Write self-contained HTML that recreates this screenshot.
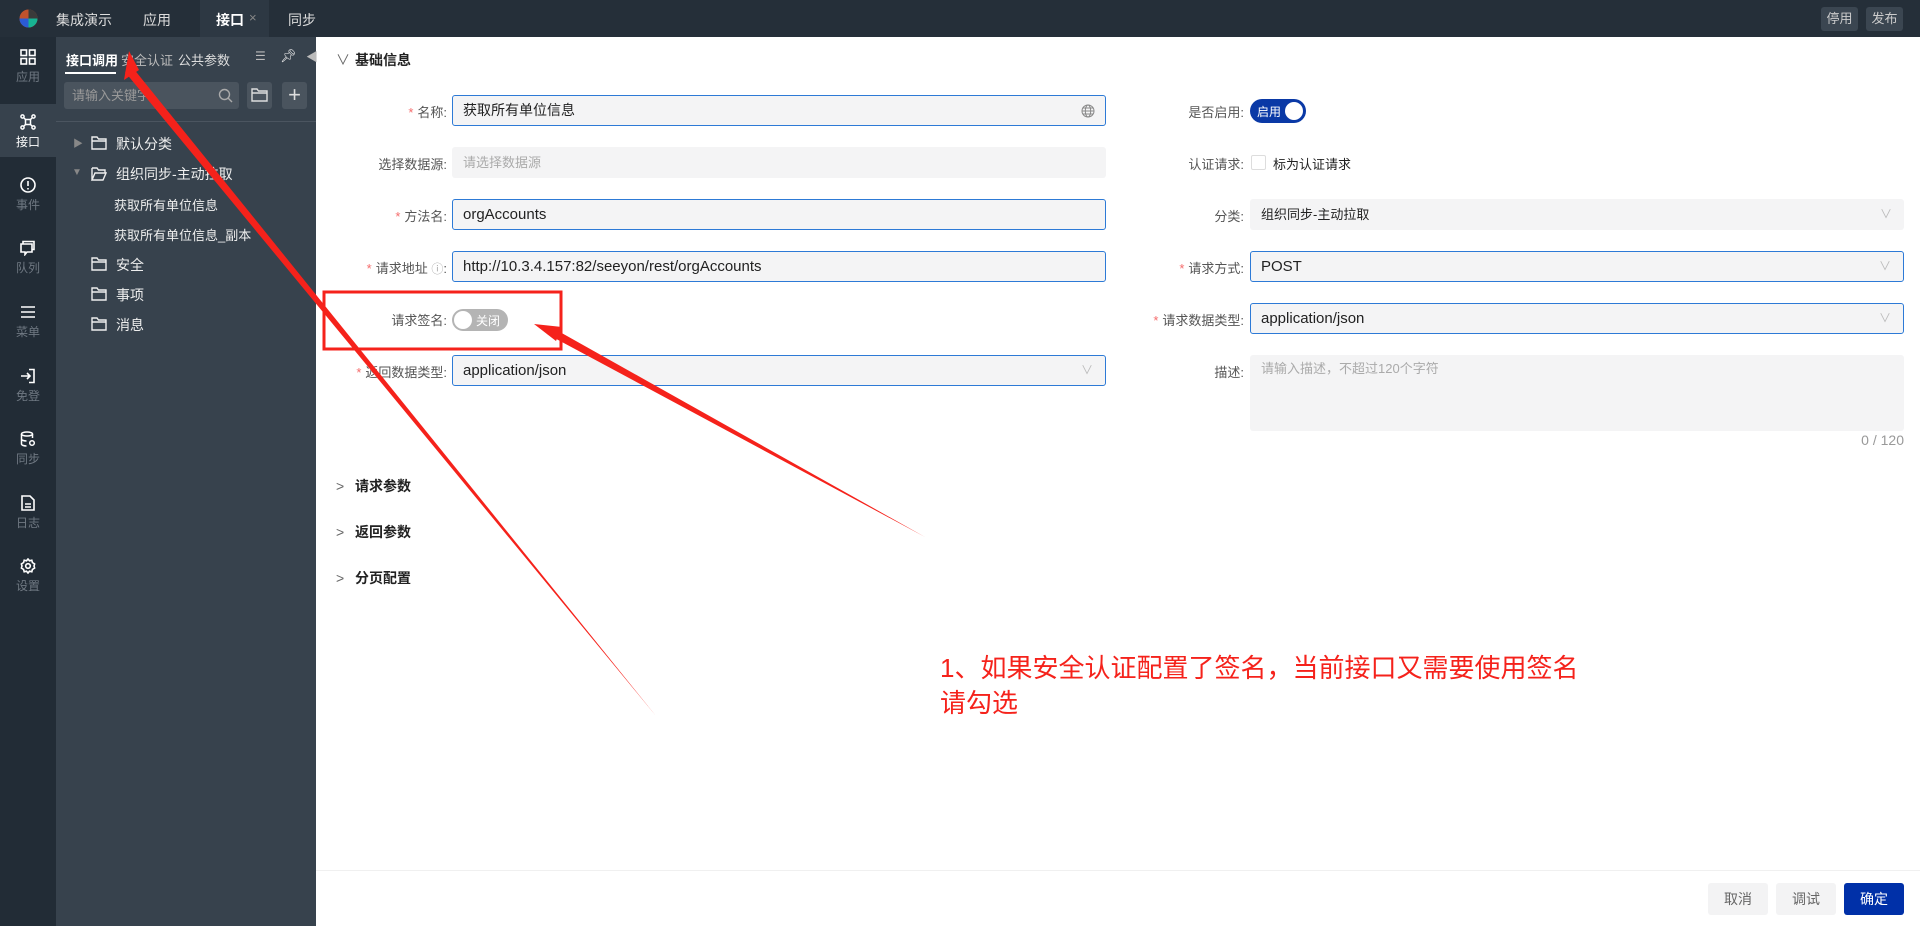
<!DOCTYPE html>
<html><head><meta charset="utf-8"><style>
*{box-sizing:border-box;margin:0;padding:0}
body{width:1920px;height:926px;overflow:hidden;position:relative;background:#fff;font-family:"Liberation Sans","Noto Sans CJK SC",sans-serif;font-size:14px;color:#222}
.abs{position:absolute}
#top{left:0;top:0;width:1920px;height:37px;background:#252f39;color:#ddd}
#top .t{position:absolute;top:10px;font-size:14px}
#left{left:0;top:37px;width:56px;height:889px;background:#222c36}
.nav{position:absolute;left:0;width:56px;text-align:center;color:#6f7882;font-size:12px}
.nav svg{display:block;margin:0 auto 3px}
#side{left:56px;top:37px;width:260px;height:889px;background:#37424d;color:#e8e8e8}
.tree{position:absolute;font-size:14px;color:#eee}
.lbl{position:absolute;text-align:right;font-size:13px;color:#555}
.lbl b{color:#f56c6c;font-weight:normal;margin-right:4px}
.inp{position:absolute;height:31px;background:#f4f4f5;border-radius:3px;font-size:15px;line-height:31px;padding-left:11px;color:#222}
.cj{font-size:14px}
.foc{border:1px solid #2d7ad6;line-height:29px;padding-left:10px}
.dd{position:absolute;right:12px;top:0;color:#bbb;font-size:12px}
.sec{position:absolute;left:336px;font-size:14px;font-weight:bold;color:#222}
.sec span{display:inline-block;width:19px;color:#666;font-weight:normal}
.btn{position:absolute;top:883px;height:32px;width:60px;border-radius:3px;background:#f3f3f4;color:#666;text-align:center;line-height:32px;font-size:14px}
</style></head><body>
<div id="top" class="abs">
  <svg class="abs" style="left:18px;top:8px" width="21" height="21" viewBox="0 0 21 21"><circle cx="10.5" cy="10.5" r="9" fill="#c0522c"/><path d="M10.5 1.5a9 9 0 0 1 9 9h-9z" fill="#3a3a3a"/><path d="M19.5 10.5a9 9 0 0 1-9 9v-9z" fill="#17b392"/><path d="M10.5 19.5a9 9 0 0 1-9-9h9z" fill="#2b5bd4"/></svg>
  <div class="t" style="left:56px">集成演示</div>
  <div class="t" style="left:143px">应用</div>
  <div class="abs" style="left:200px;top:0;width:69px;height:37px;background:#2d3843"></div>
  <div class="t" style="left:216px;color:#fff;font-weight:bold">接口</div>
  <div class="t" style="left:249px;color:#888;font-size:13px">×</div>
  <div class="t" style="left:288px">同步</div>
  <div class="abs" style="left:1821px;top:7px;width:37px;height:24px;background:#3b4651;border-radius:3px;color:#ccc;font-size:13px;text-align:center;line-height:24px">停用</div>
  <div class="abs" style="left:1866px;top:7px;width:37px;height:24px;background:#3b4651;border-radius:3px;color:#ccc;font-size:13px;text-align:center;line-height:24px">发布</div>
</div>
<div id="left" class="abs">
  <div class="nav" style="top:12px"><svg width="16" height="16" viewBox="0 0 16 16" fill="none" stroke="#fff" stroke-width="1.6"><rect x="1" y="1" width="5.5" height="5.5"/><rect x="9.5" y="1" width="5.5" height="5.5"/><rect x="1" y="9.5" width="5.5" height="5.5"/><rect x="9.5" y="9.5" width="5.5" height="5.5"/></svg>应用</div>
  <div class="abs" style="left:0;top:67px;width:56px;height:53px;background:#37424d"></div>
  <div class="nav" style="top:77px;color:#fff"><svg width="16" height="16" viewBox="0 0 16 16" fill="none" stroke="#fff" stroke-width="1.5"><circle cx="2.5" cy="2.5" r="1.6"/><circle cx="13.5" cy="2.5" r="1.6"/><circle cx="2.5" cy="13.5" r="1.6"/><circle cx="13.5" cy="13.5" r="1.6"/><rect x="5.5" y="5.5" width="5" height="5"/><path d="M4 4l2 2M12 4l-2 2M4 12l2-2M12 12l-2-2"/></svg>接口</div>
  <div class="nav" style="top:140px"><svg width="16" height="16" viewBox="0 0 16 16" fill="none" stroke="#fff" stroke-width="1.6"><circle cx="8" cy="8" r="7"/><path d="M8 4v5M8 11v1.5"/></svg>事件</div>
  <div class="nav" style="top:203px"><svg width="16" height="16" viewBox="0 0 16 16" fill="none" stroke="#fff" stroke-width="1.6"><path d="M3 4V1.5h11v8h-2"/><path d="M1 4h11v8H7l-2 2.5V12H1z"/></svg>队列</div>
  <div class="nav" style="top:267px"><svg width="16" height="16" viewBox="0 0 16 16" stroke="#fff" stroke-width="1.6"><path d="M1 3h14M1 8h14M1 13h14"/></svg>菜单</div>
  <div class="nav" style="top:331px"><svg width="16" height="16" viewBox="0 0 16 16" fill="none" stroke="#fff" stroke-width="1.6"><path d="M9 1.5h5v13H9"/><path d="M1 8h9M7 5l3 3-3 3"/></svg>免登</div>
  <div class="nav" style="top:394px"><svg width="16" height="16" viewBox="0 0 16 16" fill="none" stroke="#fff" stroke-width="1.5"><ellipse cx="7" cy="3" rx="5.5" ry="2"/><path d="M1.5 3v10c0 1 2 2 5 2M12.5 3v4M1.5 8c0 1 2 2 5 2"/><circle cx="12" cy="12" r="2.3"/></svg>同步</div>
  <div class="nav" style="top:458px"><svg width="16" height="16" viewBox="0 0 16 16" fill="none" stroke="#fff" stroke-width="1.6"><path d="M2 1h8l4 4v10H2z"/><path d="M5 9h6M5 12h6"/></svg>日志</div>
  <div class="nav" style="top:521px"><svg width="16" height="16" viewBox="0 0 16 16" fill="none" stroke="#fff" stroke-width="1.6"><circle cx="8" cy="8" r="2.3"/><path d="M8 1l1.5 1.8 2.3-.6.6 2.3L14.6 6 14 8l.6 2-2.2 1.5-.6 2.3-2.3-.6L8 15l-1.5-1.8-2.3.6-.6-2.3L1.4 10 2 8l-.6-2 2.2-1.5.6-2.3 2.3.6z"/></svg>设置</div>
</div>
<div id="side" class="abs">
  <div class="abs" style="left:10px;top:13px;font-size:13px;color:#fff;font-weight:bold">接口调用</div>
  <div class="abs" style="left:9px;top:35px;width:51px;height:2px;background:#fff"></div>
  <div class="abs" style="left:65px;top:13px;font-size:13px;color:#bbb">安全认证</div>
  <div class="abs" style="left:122px;top:13px;font-size:13px;color:#ddd">公共参数</div>
  <div class="abs" style="left:199px;top:12px;color:#bbb;font-size:12px">☰</div>
  <div class="abs" style="left:224px;top:11px;color:#eee;font-size:13px">📌︎</div>
  <div class="abs" style="left:250px;top:11px;color:#bbb;font-size:12px">◀</div>
  <div class="abs" style="left:8px;top:45px;width:175px;height:27px;background:#4a545e;border-radius:3px;color:#999;font-size:13px;line-height:27px;padding-left:8px">请输入关键字
    <svg class="abs" style="right:6px;top:6px" width="15" height="15" viewBox="0 0 15 15" fill="none" stroke="#aaa" stroke-width="1.4"><circle cx="6.5" cy="6.5" r="5"/><path d="M10 10l4 4"/></svg></div>
  <div class="abs" style="left:191px;top:45px;width:25px;height:27px;background:#4a545e;border-radius:3px"><svg style="margin:6px 4px" width="17" height="14" viewBox="0 0 17 14" fill="none" stroke="#ddd" stroke-width="1.4"><path d="M1 1h5l1.5 2H16v10H1z M1 5h15"/></svg></div>
  <div class="abs" style="left:226px;top:45px;width:25px;height:27px;background:#4a545e;border-radius:3px;color:#ddd;font-size:22px;text-align:center;line-height:26px">+</div>
  <div class="abs" style="left:0;top:84px;width:260px;height:1px;background:#4b5560"></div>
  <div class="tree" style="left:17px;top:98px;color:#888;font-size:10px">▶</div>
  <div class="tree" style="left:16px;top:130px;color:#888;font-size:10px">▼</div>
  <svg class="abs" style="left:35px;top:99px" width="16" height="14" viewBox="0 0 16 14" fill="none" stroke="#eee" stroke-width="1.4"><path d="M1 1h5l1.5 2H15v10H1z M1 5h14"/></svg>
  <svg class="abs" style="left:35px;top:130px" width="16" height="14" viewBox="0 0 16 14" fill="none" stroke="#eee" stroke-width="1.4"><path d="M1 1h5l1.5 2H14v3M1 13V1M1 13h11l3-7H4z"/></svg>
  <svg class="abs" style="left:35px;top:220px" width="16" height="14" viewBox="0 0 16 14" fill="none" stroke="#eee" stroke-width="1.4"><path d="M1 1h5l1.5 2H15v10H1z M1 5h14"/></svg>
  <svg class="abs" style="left:35px;top:250px" width="16" height="14" viewBox="0 0 16 14" fill="none" stroke="#eee" stroke-width="1.4"><path d="M1 1h5l1.5 2H15v10H1z M1 5h14"/></svg>
  <svg class="abs" style="left:35px;top:280px" width="16" height="14" viewBox="0 0 16 14" fill="none" stroke="#eee" stroke-width="1.4"><path d="M1 1h5l1.5 2H15v10H1z M1 5h14"/></svg>
  <div class="tree" style="left:60px;top:97px">默认分类</div>
  <div class="tree" style="left:60px;top:127px">组织同步-主动拉取</div>
  <div class="tree" style="left:58px;top:158px;font-size:13px">获取所有单位信息</div>
  <div class="tree" style="left:58px;top:188px;font-size:13px">获取所有单位信息_副本</div>
  <div class="tree" style="left:60px;top:218px">安全</div>
  <div class="tree" style="left:60px;top:248px">事项</div>
  <div class="tree" style="left:60px;top:278px">消息</div>
</div>

<div class="sec" style="top:50px"><span>∨</span>基础信息</div>

<div class="lbl" style="right:1473px;top:102px"><b>*</b>名称:</div>
<div class="inp foc cj" style="left:452px;top:95px;width:654px">获取所有单位信息<svg class="abs" style="right:10px;top:8px" width="14" height="14" viewBox="0 0 14 14" fill="none" stroke="#888" stroke-width="1"><circle cx="7" cy="7" r="6"/><ellipse cx="7" cy="7" rx="2.7" ry="6"/><path d="M1 7h12M2 4h10M2 10h10"/></svg></div>
<div class="lbl" style="right:1473px;top:154px">选择数据源:</div>
<div class="inp" style="left:452px;top:147px;width:654px;color:#aaa;font-size:13px">请选择数据源</div>
<div class="lbl" style="right:1473px;top:206px"><b>*</b>方法名:</div>
<div class="inp foc" style="left:452px;top:199px;width:654px">orgAccounts</div>
<div class="lbl" style="right:1473px;top:258px"><b>*</b>请求地址 <span style="color:#aaa;font-size:12px">ⓘ</span>:</div>
<div class="inp foc" style="left:452px;top:251px;width:654px">http://10.3.4.157:82/seeyon/rest/orgAccounts</div>
<div class="lbl" style="right:1473px;top:310px">请求签名:</div>
<div class="abs" style="left:452px;top:309px;width:56px;height:22px;border-radius:11px;background:#b4b4b4"><div class="abs" style="left:2px;top:2px;width:18px;height:18px;border-radius:9px;background:#fff"></div><span class="abs" style="left:24px;top:3px;color:#fff;font-size:12px">关闭</span></div>
<div class="lbl" style="right:1473px;top:362px"><b>*</b>返回数据类型:</div>
<div class="inp foc" style="left:452px;top:355px;width:654px">application/json<span class="dd" style="line-height:29px">∨</span></div>

<div class="lbl" style="right:676px;top:102px">是否启用:</div>
<div class="abs" style="left:1250px;top:99px;width:56px;height:24px;border-radius:12px;background:#0a39a6"><span class="abs" style="left:7px;top:4px;color:#fff;font-size:12px">启用</span><div class="abs" style="right:3px;top:3px;width:18px;height:18px;border-radius:9px;background:#fff"></div></div>
<div class="lbl" style="right:676px;top:154px">认证请求:</div>
<div class="abs" style="left:1251px;top:155px;width:15px;height:15px;border:1px solid #ddd;border-radius:2px"></div>
<div class="abs" style="left:1273px;top:154px;font-size:13px">标为认证请求</div>
<div class="lbl" style="right:676px;top:206px">分类:</div>
<div class="inp" style="left:1250px;top:199px;width:654px;font-size:13px">组织同步-主动拉取<span class="dd">∨</span></div>
<div class="lbl" style="right:676px;top:258px"><b>*</b>请求方式:</div>
<div class="inp foc" style="left:1250px;top:251px;width:654px">POST<span class="dd" style="line-height:29px">∨</span></div>
<div class="lbl" style="right:676px;top:310px"><b>*</b>请求数据类型:</div>
<div class="inp foc" style="left:1250px;top:303px;width:654px">application/json<span class="dd" style="line-height:29px">∨</span></div>
<div class="lbl" style="right:676px;top:362px">描述:</div>
<div class="inp" style="left:1250px;top:355px;width:654px;height:76px;line-height:28px;color:#aaa;font-size:13px">请输入描述，不超过120个字符</div>
<div class="abs" style="right:16px;top:432px;color:#999;font-size:14px">0 / 120</div>

<div class="sec" style="top:476px"><span>&gt;</span>请求参数</div>
<div class="sec" style="top:522px"><span>&gt;</span>返回参数</div>
<div class="sec" style="top:568px"><span>&gt;</span>分页配置</div>

<div class="abs" style="left:316px;top:870px;width:1604px;height:1px;background:#f0f0f0"></div>
<div class="btn" style="left:1708px">取消</div>
<div class="btn" style="left:1776px">调试</div>
<div class="btn" style="left:1844px;background:#0030a8;color:#fff">确定</div>

<svg class="abs" style="left:0;top:0" width="1920" height="926">
  <rect x="324" y="292" width="237" height="57" fill="none" stroke="#f5221b" stroke-width="3"/>
  <polygon points="656,716 133,68 125,72" fill="#f5221b"/>
  <polygon points="129,51 124,80 139,70" fill="#f5221b"/>
  <polygon points="925,537 551,327 547,334" fill="#f5221b"/>
  <polygon points="534,324 556,341 562,327" fill="#f5221b"/>
</svg>
<div class="abs" style="left:940px;top:651px;color:#f5221b;font-size:26px;line-height:35px">1、如果安全认证配置了签名，当前接口又需要使用签名<br>请勾选</div>
</body></html>
